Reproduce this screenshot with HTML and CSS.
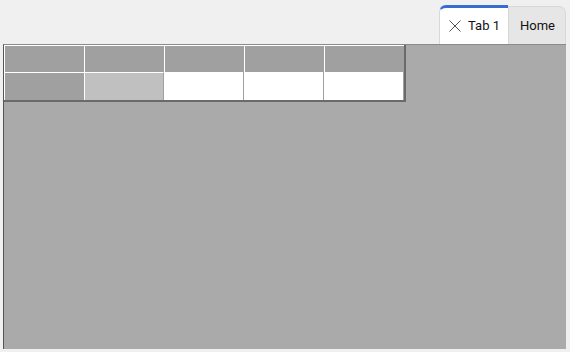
FILE: index.html
```html
<!DOCTYPE html>
<html lang="en">
<head>
    <meta charset="UTF-8">
    <title>Grid</title>
    <link rel="stylesheet" href="styles.css">
</head>
<body>
    <div class="window">
        <div class="tabs">
            <div class="tab active">
                <svg class="close" width="14" height="14" viewBox="0 0 14 14">
                    <path d="M1.5 1.5 L12.5 12.5 M12.5 1.5 L1.5 12.5" stroke="#3c3c44" stroke-width="0.9" fill="none"/>
                </svg>
                <span>Tab 1</span>
            </div>
            <div class="tab">
                <span>Home</span>
            </div>
        </div>
        <div class="panel">
            <div class="grid">
                <div class="cell head"></div>
                <div class="cell head"></div>
                <div class="cell head"></div>
                <div class="cell head"></div>
                <div class="cell head"></div>
                <div class="cell head"></div>
                <div class="cell current"></div>
                <div class="cell"></div>
                <div class="cell"></div>
                <div class="cell"></div>
            </div>
        </div>
    </div>
</body>
</html>
```

FILE: styles.css
```css
body {
    margin: 0;
    background-color: #f0f0f0;
    font-family: 'Segoe UI', Roboto, 'Noto Sans', sans-serif;
    font-size: 13px;
    color: #111;
}
.window {
    width: 570px;
    height: 352px;
    display: flex;
    flex-direction: column;
}
.tabs {
    display: flex;
    justify-content: flex-end;
    align-items: flex-end;
    height: 44px;
    padding-right: 4px;
}
.tab {
    height: 38px;
    box-sizing: border-box;
    display: flex;
    align-items: center;
    gap: 6px;
    padding: 0 10px 0 11px;
    background-color: #e6e6e6;
    border: 1px solid #d8d8d8;
    border-bottom: none;
    border-radius: 0 7px 0 0;
}
.tab.active {
    height: 39px;
    background-color: #fff;
    border: none;
    border-top: 3px solid #3a6bd0;
    border-left: 1px solid #d8d8d8;
    border-radius: 7px 0 0 0;
    padding: 0 8px 0 8px;
}
.tab.active span {
    margin-top: -1px;
}
.close {
    display: block;
}
.panel {
    margin: 0 4px 3px 3px;
    flex: 1;
    background-color: #aaaaaa;
    border-left: 1px solid #555;
    border-top: 1px solid #8a8a8a;
}
.grid {
    display: grid;
    grid-template-columns: repeat(5, 80px);
    grid-template-rows: 27px 28px;
    width: 400px;
    border-right: 2px solid #6a6a6a;
    border-bottom: 2px solid #6a6a6a;
}
.cell {
    background-color: #fff;
    border-right: 1px solid #a0a0a0;
    box-sizing: border-box;
}
.cell.head {
    background-color: #a0a0a0;
    border-left: 1px solid #fff;
    border-top: 1px solid #fff;
    border-right: none;
}
.cell.current {
    background-color: #c0c0c0;
    border-left: 1px solid #fff;
    border-top: 1px solid #fff;
    border-right: 1px solid #a0a0a0;
}
```
